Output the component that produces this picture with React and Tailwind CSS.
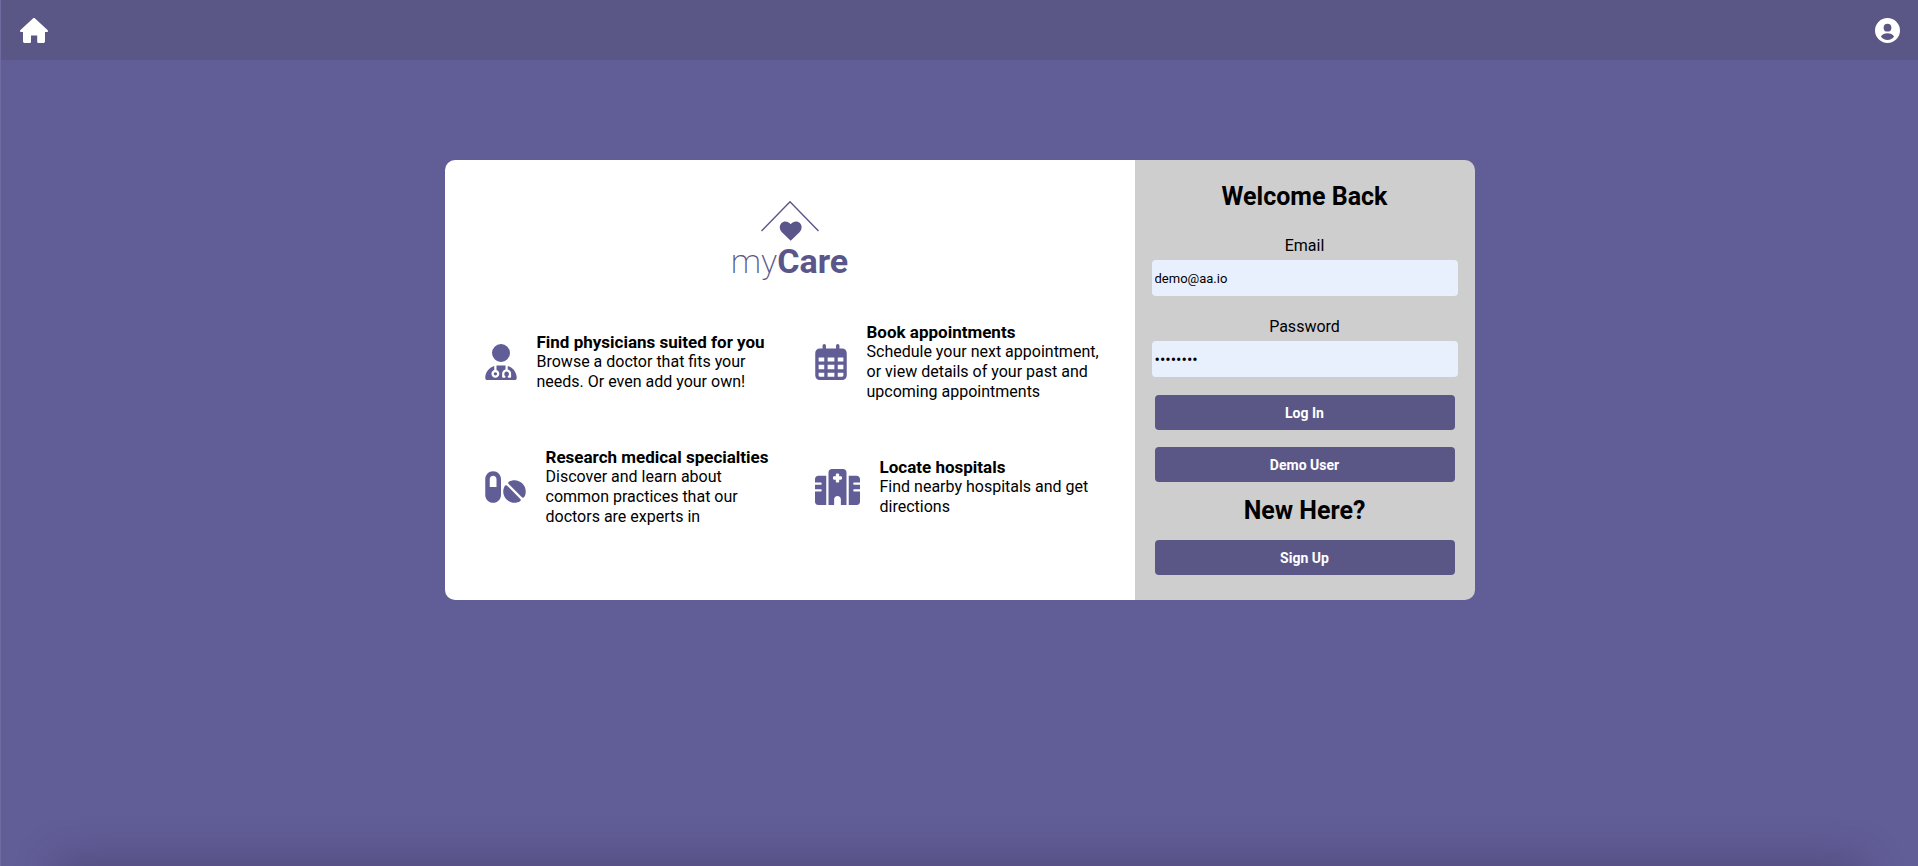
import { FaUserDoctor, FaRegCalendarDays, FaPills, FaHospital } from "react-icons/fa6";

const features = [
  {
    Icon: FaUserDoctor,
    iconWidth: "w-8",
    title: "Find physicians suited for you",
    text: "Browse a doctor that fits your needs. Or even add your own!",
  },
  {
    Icon: FaRegCalendarDays,
    iconWidth: "w-8",
    title: "Book appointments",
    text: "Schedule your next appointment, or view details of your past and upcoming appointments",
  },
  {
    Icon: FaPills,
    iconWidth: "w-[41px]",
    title: "Research medical specialties",
    text: "Discover and learn about common practices that our doctors are experts in",
  },
  {
    Icon: FaHospital,
    iconWidth: "w-[45px]",
    title: "Locate hospitals",
    text: "Find nearby hospitals and get directions",
  },
];

function HomeIcon() {
  return (
    <svg viewBox="0 0 28 25" className="h-[25px] w-7" fill="currentColor" aria-hidden="true">
      <path d="M12.9 0.5c0.6-0.6 1.6-0.6 2.2 0L27.5 11.9c0.9 0.8 0.5 2.1-0.7 2.1H25v9.2c0 1-0.8 1.8-1.8 1.8h-4.4c-0.9 0-1.6-0.7-1.6-1.6V17.5h-6.2v5.9c0 0.9-0.7 1.6-1.6 1.6H4.8C3.8 25 3 24.2 3 23.2V14H1.2C0 14-0.4 12.7 0.5 11.9Z" />
    </svg>
  );
}

function AccountIcon() {
  return (
    <svg viewBox="0 0 25 25" className="size-[25px]" fill="currentColor" fillRule="evenodd" aria-hidden="true">
      <path d="M12.5 0a12.5 12.5 0 1 0 0 25a12.5 12.5 0 1 0 0-25Zm0 5.8a3.9 3.9 0 1 1 0 7.8a3.9 3.9 0 1 1 0-7.8Zm0 9.4c2.8 0 5.2 1 6.6 3.3c-1.4 2.3-3.8 3.4-6.6 3.4s-5.2-1.1-6.6-3.4c1.4-2.3 3.8-3.3 6.6-3.3Z" />
    </svg>
  );
}

function Logo() {
  return (
    <div className="flex flex-col items-center text-[#5a5689]">
      <svg viewBox="0 0 58 41" className="h-[41px] w-[58px]" aria-hidden="true">
        <path d="M0.5 31L29 1.8L57.5 31" fill="none" stroke="currentColor" strokeWidth="1.4" />
        <path
          d="M29.7 40.8L20.9 32.2C18.2 29.4 18.2 25.6 20.3 23.3C22.8 20.700 27 21 29.700 24.200C32.400 21 36.600 20.700 39.100 23.300C41.200 25.600 41.200 29.400 38.500 32.200Z"
          fill="currentColor"
        />
      </svg>
      <p className="text-[34px] leading-10">
        <span className="font-extralight">my</span>
        <span className="font-bold">Care</span>
      </p>
    </div>
  );
}

function Feature({ Icon, iconWidth, title, text }) {
  return (
    <li className="flex items-center gap-5">
      <Icon className={`h-9 shrink-0 text-[#615d96] ${iconWidth}`} />
      <div>
        <h2 className="text-[17px] leading-5 font-bold">{title}</h2>
        <p>{text}</p>
      </div>
    </li>
  );
}

function Field({ id, label, type, value, textSize }) {
  return (
    <div className="flex flex-col gap-1">
      <label htmlFor={id} className="text-center">
        {label}
      </label>
      <input
        id={id}
        type={type}
        defaultValue={value}
        className={`h-9 w-full rounded bg-[#e8f0fe] px-[3px] outline-none ${textSize}`}
      />
    </div>
  );
}

function Button({ children, type = "button" }) {
  return (
    <button type={type} className="h-[35px] w-full rounded bg-[#5a5787] text-sm font-bold text-white">
      {children}
    </button>
  );
}

export default function App() {
  return (
    <div className="relative flex min-h-screen flex-col overflow-hidden border-l border-[#6f6ba0] bg-[#615d96] font-['Roboto',sans-serif] text-base leading-5 text-black">
      <header className="flex h-15 items-center justify-between bg-[#5a5787] pt-px pr-[18px] pl-[19px] text-white">
        <a href="#home" aria-label="Home">
          <HomeIcon />
        </a>
        <button type="button" aria-label="Account">
          <AccountIcon />
        </button>
      </header>

      <main className="mx-auto mt-25 flex w-full max-w-[1030px] overflow-hidden rounded-[10px]">
        <section className="flex flex-1 flex-col bg-white pt-10 pr-6 pl-10">
          <div className="pr-4">
            <Logo />
          </div>
          <ul className="mt-[41px] grid grid-cols-[290px_1fr] gap-x-10 gap-y-[45px]">
            {features.map((feature) => (
              <Feature key={feature.title} {...feature} />
            ))}
          </ul>
        </section>

        <section className="w-[340px] bg-[#cecece] px-[17px] pt-[21px] pb-[25px]">
          <h1 className="text-center text-[25px] leading-8 font-bold">Welcome Back</h1>
          <form className="mt-[23px] flex flex-col gap-[21px]">
            <Field id="email" label="Email" type="email" value="demo@aa.io" textSize="text-[13px]" />
            <Field id="password" label="Password" type="password" value="password" textSize="text-base" />
            <div className="-mt-[3px] flex flex-col gap-[17px] px-[3px]">
              <Button type="submit">Log In</Button>
              <Button>Demo User</Button>
            </div>
          </form>
          <div className="px-[3px]">
            <h2 className="my-[13px] text-center text-[25px] leading-8 font-bold">New Here?</h2>
            <Button>Sign Up</Button>
          </div>
        </section>
      </main>

      <div className="absolute inset-x-15 top-full h-10 shadow-[0_0_40px_4px_rgba(60,50,90,0.45)]" />
    </div>
  );
}
